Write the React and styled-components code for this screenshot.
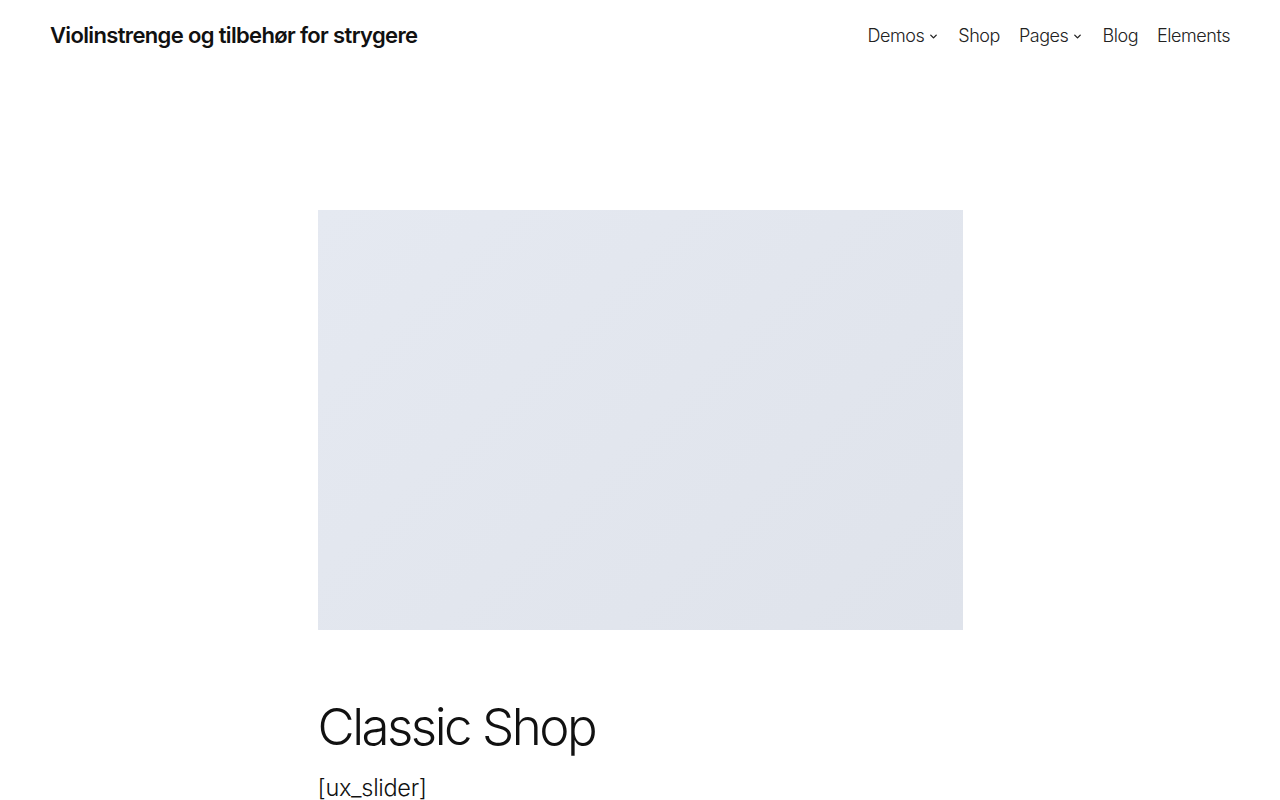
import React from "react";
import styled, { createGlobalStyle } from "styled-components";

const GlobalStyle = createGlobalStyle`
  body {
    margin: 0;
    background: #fff;
    font-family: Inter, "Noto Sans", sans-serif;
    color: #111;
  }
`;

const navItems = [
  { label: "Demos", sub: true },
  { label: "Shop" },
  { label: "Pages", sub: true },
  { label: "Blog" },
  { label: "Elements" },
];

const Chevron = () => (
  <svg width="11" height="11" viewBox="0 0 24 24" fill="none" stroke="currentColor" strokeWidth="3" strokeLinecap="round" strokeLinejoin="round">
    <path d="M6 9l6 6 6-6" />
  </svg>
);

const App = () => (
  <>
    <GlobalStyle />
    <Header>
      <SiteTitle>Violinstrenge og tilbehør for strygere</SiteTitle>
      <Nav>
        {navItems.map((item) => (
          <NavItem key={item.label}>
            {item.label}
            {item.sub ? <Chevron /> : null}
          </NavItem>
        ))}
      </Nav>
    </Header>
    <Main>
      <Placeholder />
      <Title>Classic Shop</Title>
      <Shortcode>[ux_slider]</Shortcode>
    </Main>
  </>
);

const Header = styled.header`
  display: flex;
  justify-content: space-between;
  align-items: center;
  height: 70px;
  padding: 0 50px;
`;

const SiteTitle = styled.a`
  font-size: 22px;
  font-weight: 600;
  letter-spacing: -0.65px;
  color: #111;
`;

const Nav = styled.nav`
  display: flex;
  align-items: center;
  gap: 19px;
`;

const NavItem = styled.a`
  display: flex;
  align-items: center;
  gap: 4px;
  font-size: 18px;
  font-weight: 300;
  letter-spacing: -0.45px;
  color: #222;
  svg {
    margin-top: 2px;
  }
`;

const Main = styled.main`
  width: 645px;
  margin: 140px auto 0;
`;

const Placeholder = styled.div`
  height: 420px;
  background: linear-gradient(135deg, #e5e9f1 0%, #e2e6ee 50%, #dfe3eb 100%);
`;

const Title = styled.h1`
  margin: 66px 0 0;
  font-size: 51px;
  line-height: 1.2;
  font-weight: 300;
  letter-spacing: -2.5px;
`;

const Shortcode = styled.p`
  margin: 16px 0 0;
  font-size: 23.5px;
  font-weight: 300;
  letter-spacing: -0.3px;
`;

export default App;
